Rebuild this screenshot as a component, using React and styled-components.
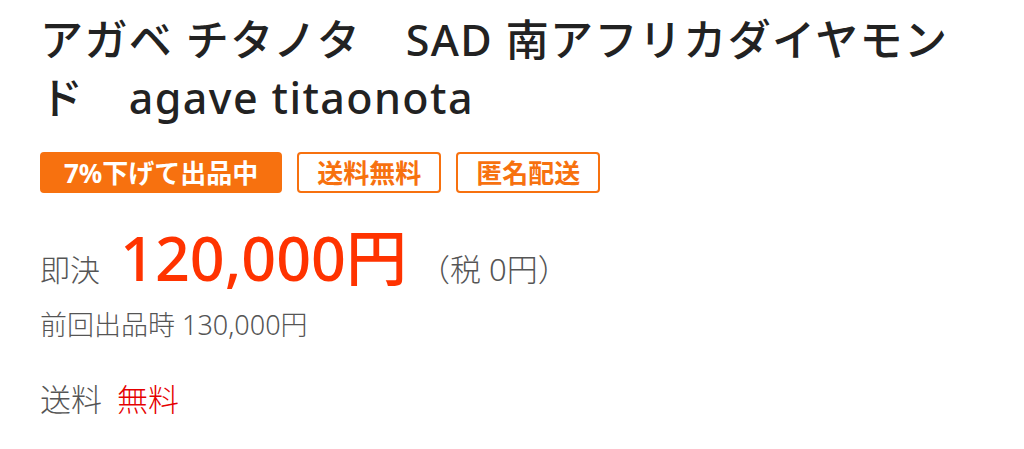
import React from "react";
import styled, { createGlobalStyle } from "styled-components";

const Global = createGlobalStyle`
  html, body { margin: 0; padding: 0; background: #fff; }
  body { font-family: "Noto Sans", "Noto Sans CJK JP", sans-serif; }
`;

const Page = styled.div`
  padding: 11px 30px 0 40px;
  display: flex;
  flex-direction: column;
`;

const Title = styled.h1`
  margin: 0;
  font-size: 43px;
  line-height: 58px;
  font-weight: 500;
  letter-spacing: 1.4px;
  color: #222;
  width: 945px;
`;

const Badges = styled.div`
  display: flex;
  gap: 15px;
  margin-top: 25px;
`;

const Badge = styled.span`
  display: inline-flex;
  align-items: center;
  justify-content: center;
  height: 41px;
  padding: 0 ${(p) => (p.$solid ? "22px" : "18px")};
  box-sizing: border-box;
  border: 2px solid #f7710f;
  border-radius: 4px;
  background: ${(p) => (p.$solid ? "#f7710f" : "#fff")};
  color: ${(p) => (p.$solid ? "#fff" : "#f7710f")};
  font-size: 26px;
  font-weight: 700;
  line-height: 1;
`;

const PriceRow = styled.div`
  display: flex;
  align-items: baseline;
  margin-top: 34px;
  color: #555;
`;

const Label = styled.span`
  font-size: 30px;
  font-weight: 300;
  color: #555;
  margin-right: 20px;
`;

const Price = styled.span`
  font-size: 61px;
  font-weight: 500;
  color: #ff3300;
  line-height: 1;
`;

const Tax = styled.span`
  font-size: 31px;
  font-weight: 300;
  color: #555;
  margin-left: 12px;
`;

const Previous = styled.div`
  margin-top: 19px;
  font-size: 27px;
  font-weight: 300;
  color: #555;
  line-height: 1.2;
`;

const Shipping = styled.div`
  margin-top: 34px;
  font-size: 31px;
  font-weight: 300;
  color: #555;
  display: flex;
  gap: 15px;
`;

const Free = styled.span`
  color: #e50000;
`;

export default function App() {
  return (
    <>
      <Global />
      <Page>
        <Title>アガベ チタノタ　SAD 南アフリカダイヤモンド　agave titaonota</Title>
        <Badges>
          <Badge $solid>7%下げて出品中</Badge>
          <Badge>送料無料</Badge>
          <Badge>匿名配送</Badge>
        </Badges>
        <PriceRow>
          <Label>即決</Label>
          <Price>120,000円</Price>
          <Tax>（税 0円）</Tax>
        </PriceRow>
        <Previous>前回出品時 130,000円</Previous>
        <Shipping>
          <span>送料</span>
          <Free>無料</Free>
        </Shipping>
      </Page>
    </>
  );
}
